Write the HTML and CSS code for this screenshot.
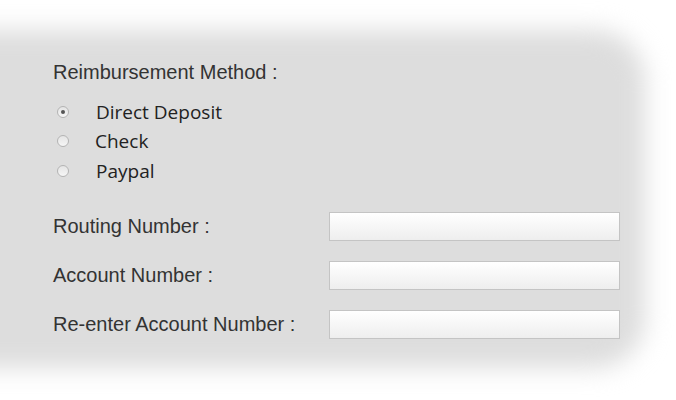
FILE: index.html
```html
<!DOCTYPE html>
<html>
<head>
  <title>Reimbursement</title>
  <link rel="stylesheet" href="styles.css">
</head>
<body>

  <div class="panel">
    <div class="section-title">Reimbursement Method :</div>

    <div class="methods">
      <label class="method"><input type="radio" name="method" checked><span>Direct Deposit</span></label>
      <label class="method"><input type="radio" name="method"><span class="check">Check</span></label>
      <label class="method"><input type="radio" name="method"><span>Paypal</span></label>
    </div>

    <div class="fields">
      <label class="field-label" for="routing">Routing Number :</label>
      <input class="field-input" type="text" id="routing">

      <label class="field-label" for="account">Account Number :</label>
      <input class="field-input" type="text" id="account">

      <label class="field-label" for="account2">Re-enter Account Number :</label>
      <input class="field-input" type="text" id="account2">
    </div>
  </div>

</body>
</html>
```

FILE: styles.css
```css
body {
  margin: 0;
  padding: 30px 0 40px;
  background-color: #fff;
  font-family: "Liberation Sans", Arial, sans-serif;
  color: #333;
}
.panel {
  position: relative;
  z-index: 0;
  box-sizing: border-box;
  width: 705px;
  margin-left: -60px;
  padding: 31px 0 29px 113px;
}
/* soft grey backdrop, blurred at the edges */
.panel::before {
  content: "";
  position: absolute;
  inset: 0;
  z-index: -1;
  background-color: #ddd;
  border-radius: 0 50px 50px 0;
  filter: blur(12px);
}
.section-title {
  font-size: 20px;
  line-height: 22px;
}
.methods {
  margin-top: 14px;
  display: flex;
  flex-direction: column;
}
.method {
  display: flex;
  align-items: center;
  height: 29.5px;
  font-family: "Open Sans", sans-serif;
  font-size: 19px;
  color: #222;
}
.method input {
  appearance: none;
  -webkit-appearance: none;
  box-sizing: border-box;
  width: 12px;
  height: 12px;
  margin: 0 27px 0 4px;
  border: 1px solid #b4b4b4;
  border-radius: 50%;
  background: linear-gradient(#e4e4e4, #f6f6f6);
  display: flex;
  align-items: center;
  justify-content: center;
}
.method input:checked::after {
  content: "";
  width: 4px;
  height: 4px;
  border-radius: 50%;
  background-color: #555;
}
.method .check {
  margin-left: -1px;
}
.fields {
  margin-top: 26px;
  display: grid;
  grid-template-columns: 276px 291px;
  row-gap: 20px;
  align-items: center;
}
.field-label {
  font-size: 20px;
  line-height: 22px;
}
.field-input {
  box-sizing: border-box;
  height: 29px;
  margin: 0;
  border: 1px solid #c4c4c4;
  background: linear-gradient(#fff, #eee);
  outline: none;
}
```
